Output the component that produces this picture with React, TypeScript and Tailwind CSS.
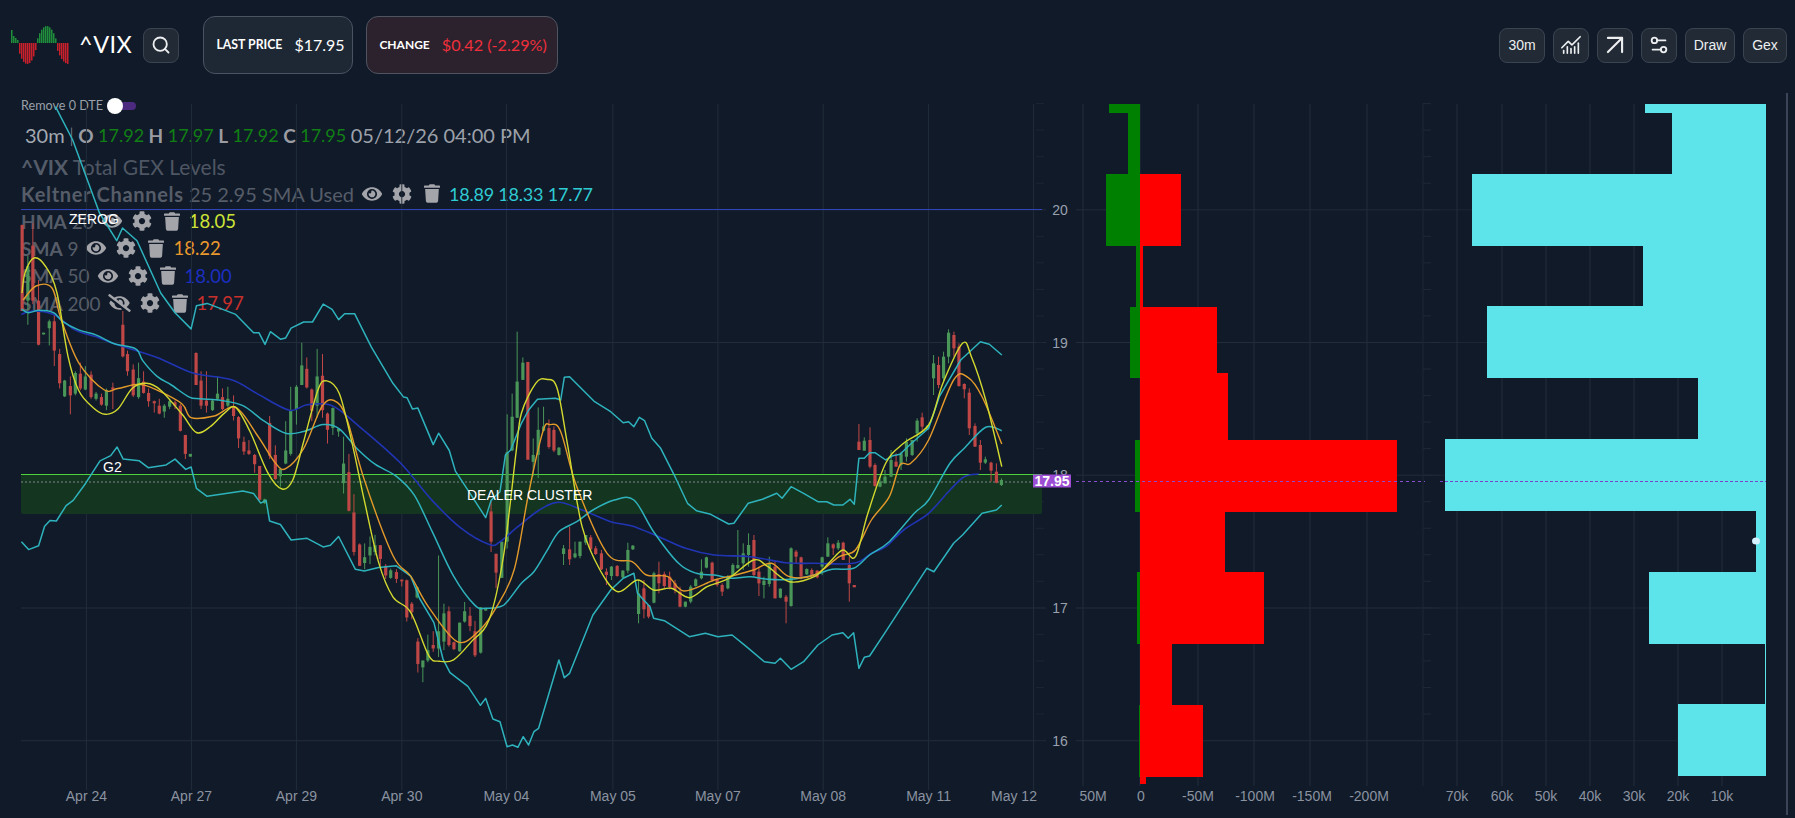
import React from 'react';
import { Search, ChartNoAxesCombined, ArrowUpRight, Settings2 } from 'lucide-react';
import { FaEye, FaEyeSlash, FaCog, FaTrash } from 'react-icons/fa';

type Pt = [number, number];

// points were read off two crops of the chart, so each has its own scale
const z3 = (a: number[]): Pt[] => {
  const out: Pt[] = [];
  for (let i = 0; i < a.length; i += 2) out.push([a[i] / 2.8, 280 + a[i + 1] / 2.904]);
  return out;
};
const z4 = (a: number[]): Pt[] => {
  const out: Pt[] = [];
  for (let i = 0; i < a.length; i += 2) out.push([500 + a[i] / 2.8, 300 + a[i + 1] / 3]);
  return out;
};

const linePath = (pts: Pt[]) =>
  pts.map((p, i) => `${i ? 'L' : 'M'}${p[0].toFixed(1)} ${p[1].toFixed(1)}`).join('');

const smoothPath = (pts: Pt[]) => {
  let d = `M${pts[0][0].toFixed(1)} ${pts[0][1].toFixed(1)}`;
  for (let i = 0; i < pts.length - 1; i++) {
    const p0 = pts[i - 1] || pts[i];
    const p1 = pts[i];
    const p2 = pts[i + 1];
    const p3 = pts[i + 2] || p2;
    const c1x = p1[0] + (p2[0] - p0[0]) / 6;
    const c1y = p1[1] + (p2[1] - p0[1]) / 6;
    const c2x = p2[0] - (p3[0] - p1[0]) / 6;
    const c2y = p2[1] - (p3[1] - p1[1]) / 6;
    d += `C${c1x.toFixed(1)} ${c1y.toFixed(1)} ${c2x.toFixed(1)} ${c2y.toFixed(1)} ${p2[0].toFixed(1)} ${p2[1].toFixed(1)}`;
  }
  return d;
};

const keltUpper: Pt[] = [
  [55.5, 106.7], [72.7, 140], [99.5, 213], [116.7, 240.7], [122.5, 228], [137, 240.7], [160.7, 293],
  ...z3([490,95,535,142,550,75,580,68,660,100,710,153,725,153,742,187,757,150,785,172,800,168,815,140,850,122,875,122,905,70,930,85,948,115,965,98,993,98,1040,195,1100,300,1130,340,1140,342,1155,375,1170,372,1213,478,1228,445,1258,495,1275,555,1310,610,1360,690,1375,640]),
  ...z4([0,575,15,465,30,450,60,370,80,330,105,298,130,296,155,295,170,300,180,232,195,230,265,305,310,335,345,368,360,365,375,380,390,352,405,362,425,415,450,445,490,530,525,610,550,632,590,643,640,672,655,670,695,610,735,598,775,580,790,595,815,560,850,580,890,605,915,605,935,615,960,615,980,598,992,613,1005,475,1020,475,1035,458,1050,458,1080,480,1100,467,1120,463,1150,432,1200,385,1230,290,1290,180,1345,125,1370,133,1405,165]),
];
const keltMid: Pt[] = [
  ...z3([60,85,80,95,110,88,150,95,175,120,220,145,270,160,320,185,380,200,400,235,440,280,480,305,530,340,560,345,620,350,680,365,740,410,800,445,850,440,905,420,950,432,1000,490,1050,535,1110,570,1160,625,1210,730,1270,860,1330,945,1360,953]),
  ...z4([0,920,20,905,60,850,95,815,130,755,165,695,215,665,260,630,320,600,375,600,430,695,500,790,550,820,600,825,650,835,700,830,750,838,815,838,880,825,930,808,990,805,1035,765,1090,725,1160,640,1200,600,1260,490,1300,445,1360,382,1405,392]),
];
const keltLow: Pt[] = [
  ...z3([60,760,80,783,108,772,125,715,140,698,158,700,185,655,205,640,240,590,280,525,310,510,328,485,345,520,390,525,415,545,465,537,490,520,520,550,535,543,550,605,580,628,680,613,710,620,730,648,745,640,755,700,785,710,815,755,860,750,905,775,925,770,948,745,995,840,1020,845,1060,835,1110,830,1150,860,1175,925,1215,995,1240,1100,1260,1140,1310,1180,1345,1235,1360,1215,1380,1275]),
  ...z4([0,1265,20,1340,35,1335,50,1342,65,1310,80,1335,95,1295,108,1285,165,1080,180,1133,195,1120,260,945,310,870,345,835,375,820,385,880,420,920,430,955,460,962,530,1010,575,1000,610,1010,650,1005,690,1040,740,1085,770,1090,785,1075,815,1108,850,1085,890,1035,930,1005,960,998,975,1015,990,998,1005,1105,1020,1072,1035,1068,1080,995,1195,805,1215,815,1270,730,1295,705,1350,640,1390,630,1405,615]),
];
const sma50: Pt[] = [
  ...z3([60,100,90,90,150,100,210,145,270,165,320,185,440,225,540,270,650,290,720,330,810,378,860,362,930,365,1000,420,1120,530,1210,640,1290,720,1370,768]),
  ...z4([0,725,50,680,110,630,165,607,230,630,310,665,370,678,440,708,520,745,600,765,700,770,800,788,880,790,990,790,1040,760,1080,740,1130,690,1200,640,1260,570,1300,530,1340,522]),
];
const hma: Pt[] = [
  [22, 293], [25, 273], [34, 258], [46, 267], [57, 293],
  ...z3([190,220,220,320,260,370,295,390,330,375,370,315,410,300,450,320,510,390,550,443,590,425,630,385,660,370,700,440,750,560,790,607,820,580,850,470,890,320,915,293,950,330,985,470,1020,640,1060,820,1100,920,1150,965,1200,1090,1230,1107,1270,1103,1320,1050,1370,985,1410,800,1445,500]),
  ...z4([60,340,100,250,130,238,160,265,190,440,230,680,280,810,330,875,385,840,430,870,480,865,530,893,580,860,640,835,710,780,750,800,810,845,880,830,920,790,960,750,995,770,1030,640,1080,490,1130,430,1200,375,1240,250,1295,130,1320,170,1360,300,1405,500]),
];
const sma9: Pt[] = [
  [23, 300], [36, 286], [52, 288],
  ...z3([170,110,220,240,290,318,330,315,390,303,440,320,510,360,535,400,600,395,660,370,720,450,770,530,800,548,850,490,900,370,935,350,970,400,1020,580,1100,800,1150,860,1200,950,1280,1050,1340,1020,1390,950,1440,840,1480,620,1520,440,1540,420]),
  ...z4([170,395,215,560,300,760,370,785,410,825,470,830,515,873,600,840,660,825,710,810,760,790,810,830,880,825,950,770,995,750,1040,660,1090,590,1120,495,1150,490,1200,420,1270,240,1310,232,1350,290,1405,432]),
];

// x, wick top, wick bottom, body top, body bottom, colour
type C = [number, number, number, number, number, 'r' | 'g'];
const candles3: C[] = [
  [62,-160,90,-160,90,'r'],[78,-70,130,-40,60,'g'],[92,-165,70,-100,60,'r'],[108,0,190,60,188,'r'],[122,153,158,153,158,'g'],[138,115,190,120,140,'g'],[152,100,250,120,205,'r'],[167,200,315,215,300,'r'],[181,290,340,292,338,'g'],[197,280,390,308,335,'r'],[211,265,335,270,330,'g'],[225,240,320,272,315,'r'],[239,250,320,280,318,'g'],[255,265,345,275,340,'r'],[269,325,350,330,345,'g'],[284,330,365,340,362,'r'],[298,315,378,320,365,'g'],[316,298,375,312,318,'r'],[344,90,225,130,222,'r'],[357,205,278,215,265,'r'],[373,245,340,260,335,'r'],[388,240,345,285,340,'g'],[402,265,330,295,328,'r'],[416,315,368,328,352,'r'],[432,350,385,352,358,'r'],[446,345,390,365,388,'r'],[460,360,400,365,382,'g'],[475,345,375,352,368,'g'],[490,350,375,355,365,'r'],[505,360,440,365,438,'r'],[519,450,520,450,505,'r'],[533,505,513,505,513,'g'],[549,210,305,212,305,'r'],[563,265,375,292,365,'r'],[578,265,385,350,365,'r'],[595,345,380,350,378,'g'],[609,280,350,330,345,'g'],[623,315,378,340,375,'r'],[638,310,370,345,365,'g'],[654,335,408,370,395,'r'],[668,395,488,398,460,'r'],[683,455,508,470,498,'r'],[697,465,508,495,505,'r'],[713,505,560,508,535,'r'],[727,540,640,540,638,'r'],[741,635,650,637,648,'g'],[755,395,520,415,510,'r'],[771,480,580,508,578,'r'],[785,545,600,548,570,'g'],[800,410,535,495,533,'g'],[814,310,510,378,505,'g'],[830,305,420,310,375,'g'],[845,182,305,248,305,'g'],[859,225,315,258,312,'r'],[873,315,410,318,380,'r'],[888,200,400,280,365,'g'],[903,215,400,278,378,'r'],[917,385,475,388,435,'r'],[932,370,450,372,430,'g'],[948,430,455,432,440,'g'],[962,455,620,533,590,'g'],[977,505,672,558,670,'r'],[991,622,800,675,790,'r'],[1007,765,830,768,830,'r'],[1021,765,840,805,822,'g'],[1036,745,825,775,800,'g'],[1050,740,800,770,790,'g'],[1065,770,830,770,810,'r'],[1080,825,868,830,858,'r'],[1094,838,868,843,865,'g'],[1110,840,880,848,868,'r'],[1125,870,890,870,875,'r'],[1139,870,992,872,980,'r'],[1153,935,985,940,965,'r'],[1168,890,925,892,922,'g'],[1170,1040,1140,1050,1115,'r'],[1184,1105,1168,1105,1125,'g'],[1198,1030,1110,1075,1105,'g'],[1213,1020,1080,1060,1070,'r'],[1228,800,1095,1020,1070,'g'],[1243,940,1075,968,1050,'g'],[1257,948,1065,962,1060,'r'],[1271,1050,1075,1052,1072,'r'],[1287,995,1080,995,1078,'g'],[1301,935,995,962,992,'g'],[1316,950,1020,975,1005,'r'],[1330,990,1095,1020,1090,'r'],[1346,950,1085,950,1082,'g'],[1360,955,960,955,960,'g'],[1375,640,790,672,760,'r'],[1389,795,895,795,850,'r'],[1405,760,865,760,865,'g'],[1420,390,780,500,760,'g'],[1434,330,497,397,495,'g'],[1448,150,400,295,400,'g'],[1464,225,290,240,290,'g'],[1478,238,520,238,522,'r'],[1493,460,570,508,528,'g'],[1507,370,575,435,508,'g'],[1522,368,440,425,438,'g'],[1537,405,490,430,485,'r'],[1551,425,500,435,495,'r'],[1565,485,510,487,508,'g'],
];
const candles4: C[] = [
  [178,735,795,745,762,'g'],[195,680,795,748,778,'r'],[210,725,775,760,772,'g'],[224,725,775,725,768,'g'],[240,705,735,705,728,'g'],[254,705,755,712,748,'r'],[268,738,765,745,762,'r'],[284,750,810,760,808,'r'],[298,805,855,815,825,'r'],[312,798,840,800,828,'g'],[328,795,830,798,828,'r'],[344,810,835,812,832,'g'],[358,728,820,750,812,'g'],[372,735,750,737,748,'g'],[388,840,970,880,942,'g'],[403,840,955,865,928,'r'],[416,915,955,915,950,'r'],[431,815,910,820,908,'g'],[445,785,880,822,850,'r'],[460,815,865,822,858,'r'],[475,815,868,830,862,'r'],[490,840,880,850,870,'r'],[504,860,922,875,920,'r'],[519,905,922,905,920,'g'],[534,855,910,860,905,'g'],[548,835,860,838,858,'g'],[564,778,838,815,835,'g'],[578,770,805,772,803,'g'],[594,785,845,788,840,'r'],[608,835,860,838,855,'r'],[622,850,888,855,875,'r'],[638,825,868,830,865,'g'],[652,790,830,795,828,'g'],[666,690,805,795,805,'g'],[681,730,810,760,790,'g'],[696,700,800,735,765,'g'],[711,705,830,720,825,'r'],[725,800,888,815,850,'r'],[739,830,895,842,855,'g'],[754,770,860,790,852,'g'],[770,785,895,800,895,'r'],[785,865,895,866,893,'g'],[801,885,970,890,905,'r'],[815,742,920,745,918,'g'],[829,750,790,755,770,'r'],[843,770,838,772,830,'r'],[859,805,825,807,823,'g'],[873,805,835,810,828,'r'],[888,810,835,812,832,'r'],[902,770,825,772,800,'g'],[918,712,770,730,770,'g'],[933,730,765,733,745,'r'],[947,720,750,728,745,'g'],[961,725,780,728,780,'r'],[978,770,905,795,850,'r'],[992,855,860,855,862,'r'],[1005,372,450,425,450,'r'],[1020,412,452,422,452,'g'],[1036,382,505,420,500,'r'],[1050,490,560,495,558,'r'],[1064,530,562,545,560,'g'],[1078,510,550,530,550,'g'],[1095,450,530,480,530,'g'],[1109,460,500,485,500,'r'],[1123,455,510,460,495,'g'],[1138,415,485,425,470,'g'],[1154,420,468,420,465,'g'],[1168,355,425,362,400,'g'],[1182,338,392,352,380,'r'],[1197,375,390,377,388,'g'],[1214,165,285,190,235,'g'],[1228,170,265,195,255,'r'],[1242,155,245,170,235,'g'],[1256,88,190,98,170,'g'],[1271,95,170,105,145,'r'],[1285,130,260,140,258,'r'],[1300,250,295,252,268,'r'],[1314,265,405,278,385,'r'],[1330,370,440,378,440,'r'],[1345,420,510,435,488,'r'],[1359,470,492,478,488,'g'],[1375,485,545,488,512,'r'],[1390,490,550,515,548,'r'],[1404,535,558,540,555,'g'],
];

const dates: [string, number][] = [
  ['Apr 24', 86.4], ['Apr 27', 191.4], ['Apr 29', 296.4], ['Apr 30', 401.8], ['May 04', 506.4],
  ['May 05', 612.9], ['May 07', 717.9], ['May 08', 823.2], ['May 11', 928.6],
];
const priceTicks: [string, number][] = [['20', 209.8], ['19', 342.5], ['18', 475.2], ['17', 608], ['16', 740.7]];
const minorTicks = Array.from({ length: 25 }, (_, i) => 103.6 + i * 26.54);

const redBars = [
  [174, 246, 1181], [246, 307, 1143], [307, 373, 1217], [373, 440, 1228], [440, 512, 1397],
  [512, 572, 1225], [572, 644, 1264], [644, 705, 1172], [705, 777, 1203], [777, 784, 1146],
];
const greenBars = [
  [104, 113, 1109], [113, 174, 1128], [174, 246, 1106], [246, 307, 1136], [307, 378, 1130],
  [440, 512, 1135], [572, 644, 1137], [705, 777, 1139],
];
const cyanBars = [
  [104, 113, 1645], [113, 174, 1672], [174, 246, 1472], [246, 306, 1643], [306, 378, 1487],
  [378, 439, 1698], [439, 511, 1445], [511, 572, 1756], [572, 644, 1649], [644, 704, 1765], [704, 776, 1678],
];

// label, grid line x, label x (the 50M label sits off its grid line)
const gexTicks: [string, number, number][] = [
  ['50M', 1083, 1093], ['0', 1140, 1141], ['-50M', 1198, 1198], ['-100M', 1254, 1255], ['-150M', 1310, 1312], ['-200M', 1367, 1369],
];
const oiTicks: [string, number][] = [
  ['70k', 1457], ['60k', 1502], ['50k', 1546], ['40k', 1590], ['30k', 1634], ['20k', 1678], ['10k', 1722],
];

const Logo: React.FC = () => {
  const bars: React.ReactNode[] = [];
  for (let x = 0; x < 58; x += 2) {
    let h = 0;
    let up = true;
    if (x < 7) h = x < 2 ? 13 : 9 - x;
    else if (x < 25) { up = false; h = 21 * Math.pow(Math.sin(((x - 6) / 19) * Math.PI), 0.6); }
    else if (x < 45) h = 17 * Math.pow(Math.sin(((x - 25) / 20) * Math.PI), 0.7);
    else { up = false; h = 21 * Math.pow(Math.sin(((x - 44) / 14) * Math.PI * 0.55), 0.7); }
    bars.push(
      <rect key={x} x={x} y={up ? 17 - h : 17} width={1.5} height={h} fill={up ? '#1f8f3c' : '#c9202c'} />,
    );
  }
  return (
    <svg width="58" height="40" viewBox="0 0 58 40" className="mt-[2px] shrink-0">
      {bars}
    </svg>
  );
};

const ToolButton: React.FC<{ className?: string; children: React.ReactNode }> = ({ className, children }) => (
  <button className={`h-[35px] flex items-center justify-center rounded-lg border border-[#3a4451] bg-[#222a35] text-sm text-[#eceef0] ${className}`}>
    {children}
  </button>
);

const RowIcons: React.FC<{ hidden?: boolean }> = ({ hidden }) => (
  <span className="flex items-center gap-[9px] text-[#a4a5aa]">
    {hidden ? <FaEyeSlash className="w-[23px] h-[18px]" /> : <FaEye className="w-[22px] h-[18px]" />}
    <FaCog className="w-[20px] h-[20px]" />
    <FaTrash className="w-[16px] h-[19px] ml-[3px]" />
  </span>
);

const IndicatorRow: React.FC<{ name: string; args: string; value: string; color: string; hidden?: boolean }> = ({
  name, args, value, color, hidden,
}) => (
  <div className="h-[27.4px] flex items-center gap-[7px] whitespace-nowrap">
    <span className="text-[#565d68]"><b>{name}</b> {args}</span>
    <RowIcons hidden={hidden} />
    <span className={`ml-[2px] text-[18.5px] ${color}`}>{value}</span>
  </div>
);

const App: React.FC = () => {
  return (
    <div className="h-screen w-full flex flex-col overflow-hidden bg-[#101a29] [font-family:'Liberation_Sans',Arial,sans-serif]">
      {/* Top bar */}
      <header className="h-[90px] shrink-0 flex items-center pl-[11px] pr-2">
        <Logo />
        <span className="ml-[10px] text-[23.5px] tracking-[0.5px] text-white [font-family:Lato,sans-serif]">^VIX</span>
        <ToolButton className="ml-[11px] w-[36px]">
          <Search className="w-[20px] h-[20px]" strokeWidth={2.2} />
        </ToolButton>
        <div className="ml-[24px] h-[58px] w-[150px] flex items-center gap-[12px] pl-[12px] rounded-xl border border-[#4a5361] bg-[#1e2835] [font-family:Lato,sans-serif]">
          <span className="text-[12.3px] font-bold text-white">LAST PRICE</span>
          <span className="text-[16px] text-white">$17.95</span>
        </div>
        <div className="ml-[13px] h-[58px] w-[192px] flex items-center gap-[12px] pl-[12px] rounded-xl border border-[#4f5461] bg-[#2b222d] [font-family:Lato,sans-serif]">
          <span className="text-[12px] font-bold text-white">CHANGE</span>
          <span className="text-[16.2px] text-[#ef2f3c]">$0.42 (-2.29%)</span>
        </div>
        <div className="ml-auto flex items-center gap-2">
          <ToolButton className="w-[46px]">30m</ToolButton>
          <ToolButton className="w-[36px]"><ChartNoAxesCombined className="w-[22px] h-[22px]" strokeWidth={1.8} /></ToolButton>
          <ToolButton className="w-[36px]"><ArrowUpRight className="w-[34px] h-[34px] shrink-0" strokeWidth={1.5} /></ToolButton>
          <ToolButton className="w-[36px]"><Settings2 className="w-[22px] h-[22px]" strokeWidth={2} /></ToolButton>
          <ToolButton className="w-[50px]">Draw</ToolButton>
          <ToolButton className="w-[44px]">Gex</ToolButton>
        </div>
      </header>

      {/* Chart panels */}
      <div className="flex h-[728px]">
        <div className="relative w-[1076px] shrink-0">
          {/* Legend sits under the canvas, lines cross over it */}
          <div className="absolute left-[21px] top-[1px] flex flex-col text-[19px] leading-none [font-family:Lato,sans-serif]">
            <div className="h-[30px] flex items-center text-[12.6px] text-[#9aa0a8]">
              Remove 0 DTE
              <span className="relative ml-[4px] w-[29px] h-[8px] rounded-full bg-[#4b2a80]">
                <span className="absolute left-0 top-[-4px] w-[16px] h-[16px] rounded-full bg-white" />
              </span>
            </div>
            <div className="h-[28px] pl-[4px] flex items-center gap-[4.5px] whitespace-nowrap text-[#a4a9b1]">
              <span className="text-[20px]">30m</span><span className="text-[#8b9099] font-light">|</span>
              <b className="text-[#9a9ca2]">O</b><span className="text-[18px] text-[#117f14]">17.92</span>
              <b className="text-[#9a9ca2]">H</b><span className="text-[18px] text-[#117f14]">17.97</span>
              <b className="text-[#9a9ca2]">L</b><span className="text-[18px] text-[#117f14]">17.92</span>
              <b className="text-[#9a9ca2]">C</b><span className="text-[18px] text-[#117f14]">17.95</span>
              <span className="text-[20px] text-[#9da1a9]">05/12/26 04:00 PM</span>
            </div>
            <div className="h-[27px] mt-[4px] flex items-center whitespace-nowrap text-[21px] text-[#4f5663]">
              <b className="text-[#545c69]">^VIX</b>&nbsp;Total GEX Levels
            </div>
            {/* the long row reads wider than the rest in the reference */}
            <div className="h-[27.4px] flex items-center gap-[7px] whitespace-nowrap">
              <span className="text-[20px] text-[#565d68]"><b className="tracking-[0.7px]">Keltner Channels</b> 25 2.95 SMA Used</span>
              <RowIcons />
              <span className="ml-[2px] text-[18px] tracking-[-0.2px] text-[#2fcbd3]">18.89 18.33 17.77</span>
            </div>
            <IndicatorRow name="HMA" args="20" value="18.05" color="text-[#cde436]" />
            <IndicatorRow name="SMA" args="9" value="18.22" color="text-[#e8982c]" />
            <IndicatorRow name="SMA" args="50" value="18.00" color="text-[#1c2fc0]" />
            <IndicatorRow name="SMA" args="200" value="17.97" color="text-[#c8302c]" hidden />
          </div>

          <svg viewBox="0 90 1076 728" className="relative block w-full h-full">
            {priceTicks.map(([, y]) => (
              <line key={y} x1="21" x2="1046" y1={y} y2={y} stroke="#222d3b" />
            ))}
            {minorTicks.map((y) => (
              <line key={y} x1="1036" x2="1044" y1={y} y2={y} stroke="#1c2634" />
            ))}
            {[...dates.map((d) => d[1]), 1033.6].map((x) => (
              <line key={x} x1={x} x2={x} y1="104" y2="790" stroke="#222d3b" />
            ))}

            {/* dealer cluster zone */}
            <rect x="21" y="474" width="1021" height="40" rx="2" fill="#14351f" />
            <line x1="21" x2="1042" y1="474.5" y2="474.5" stroke="#4fd13f" />
            <line x1="21" x2="1032" y1="482" y2="482" stroke="#7f8791" strokeDasharray="2 2" />
            <line x1="21" x2="1042" y1="209.5" y2="209.5" stroke="#2f44b8" strokeWidth="1.2" />

            {/* candles */}
            {[...candles3.map((c) => ({ c, x: c[0] / 2.8, y: (v: number) => 280 + v / 2.904 })),
              ...candles4.map((c) => ({ c, x: 500 + c[0] / 2.8, y: (v: number) => 300 + v / 3 }))].map(({ c, x, y }, i) => {
              const col = c[5] === 'r' ? '#bf4745' : '#4a9558';
              return (
                <g key={i}>
                  <line x1={x} x2={x} y1={y(c[1])} y2={y(c[2])} stroke={col} />
                  <rect x={x - 1.6} y={y(c[3])} width="3.2" height={Math.max(1.5, y(c[4]) - y(c[3]))} fill={col} />
                </g>
              );
            })}

            <g fill="none" strokeLinejoin="round">
              <path d={smoothPath(sma50)} stroke="#2135b4" strokeWidth="1.6" />
              <path d={linePath(keltUpper)} stroke="#2eb3bd" strokeWidth="1.5" />
              <path d={smoothPath(keltMid)} stroke="#2eb3bd" strokeWidth="1.5" />
              <path d={linePath(keltLow)} stroke="#2eb3bd" strokeWidth="1.5" />
              <path d={smoothPath(sma9)} stroke="#e39a2a" strokeWidth="1.4" />
              <path d={smoothPath(hma)} stroke="#d3d92f" strokeWidth="1.4" />
            </g>

            <g className="fill-white text-[14px]">
              <text x="69" y="224">ZEROG</text>
              <text x="103" y="472">G2</text>
              <text x="467" y="500">DEALER CLUSTER</text>
            </g>

            <g className="fill-[#8b93a0] text-[14px]" textAnchor="middle">
              {dates.map(([t, x]) => (
                <text key={t} x={x} y="801">{t}</text>
              ))}
              <text x="1014" y="801">May 12</text>
            </g>
            <g className="fill-[#9aa1ad] text-[14px]" textAnchor="middle">
              {priceTicks.map(([t, y]) => (
                <text key={t} x="1060" y={y + 5}>{t}</text>
              ))}
            </g>
            <rect x="1033" y="474.5" width="38" height="13" fill="#9b4dd4" />
            <text x="1052" y="486" textAnchor="middle" className="fill-white text-[14px] font-bold">17.95</text>
          </svg>
        </div>

        <svg viewBox="1076 90 364 728" className="block w-[364px] h-full shrink-0">
          {priceTicks.map(([, y]) => (
            <line key={y} x1="1076" x2="1440" y1={y} y2={y} stroke="#222d3b" />
          ))}
          {gexTicks.map(([t, x]) => (
            <line key={t} x1={x} x2={x} y1="104" y2="786" stroke="#222d3b" />
          ))}
          <line x1="1423" x2="1423" y1="104" y2="786" stroke="#1d2735" />
          {minorTicks.map((y) => (
            <line key={y} x1="1423" x2="1431" y1={y} y2={y} stroke="#1f2937" />
          ))}
          {greenBars.map(([a, b, x]) => (
            <rect key={a} x={x} y={a} width={1140 - x} height={b - a} fill="#008000" />
          ))}
          {redBars.map(([a, b, x]) => (
            <rect key={a} x="1140" y={a} width={x - 1140} height={b - a} fill="#ff0000" />
          ))}
          <line x1="1076" x2="1425" y1="481.5" y2="481.5" stroke="#8a4fd0" strokeDasharray="3 3" />
          <g className="fill-[#8b93a0] text-[14px]" textAnchor="middle">
            {gexTicks.map(([t, , lx]) => (
              <text key={t} x={lx} y="801">{t}</text>
            ))}
          </g>
        </svg>

        <svg viewBox="1440 90 346 728" className="block w-[346px] h-full shrink-0">
          {priceTicks.map(([, y]) => (
            <line key={y} x1="1440" x2="1766" y1={y} y2={y} stroke="#1c2634" />
          ))}
          {oiTicks.map(([t, x]) => (
            <line key={t} x1={x} x2={x} y1="104" y2="786" stroke="#222d3b" />
          ))}
          {cyanBars.map(([a, b, x]) => (
            <rect key={a} x={x} y={a} width={1766 - x} height={b - a} fill="#5de3ea" />
          ))}
          <line x1="1440" x2="1766" y1="481.5" y2="481.5" stroke="#7a45c8" strokeDasharray="3 2" />
          <ellipse cx="1756" cy="541" rx="4" ry="3.5" fill="#d4f1ff" />
          <g className="fill-[#8b93a0] text-[14px]" textAnchor="middle">
            {oiTicks.map(([t, x]) => (
              <text key={t} x={x} y="801">{t}</text>
            ))}
          </g>
        </svg>

        <div className="w-[2px] my-[3px] bg-[#3a4558]" />
      </div>
    </div>
  );
};

export default App;
